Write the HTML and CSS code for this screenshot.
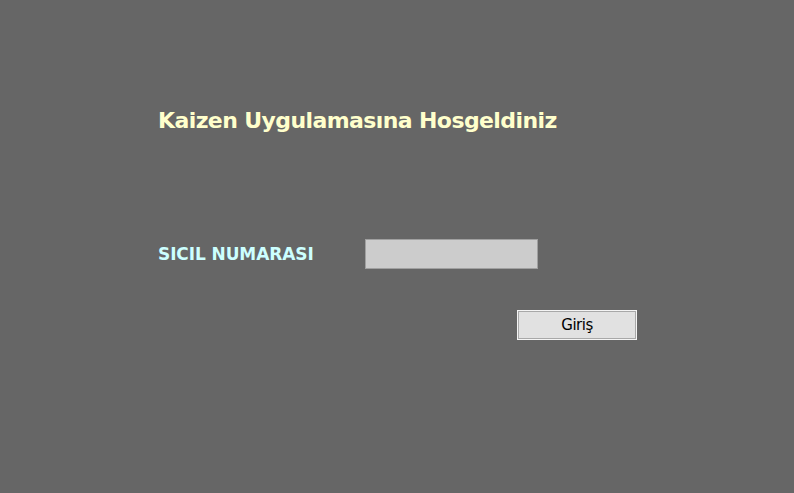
FILE: index.html
```html
<!DOCTYPE html>
<html lang="tr">
<head>
<meta charset="utf-8">
<title>Kaizen</title>
<link rel="stylesheet" href="styles.css">
</head>
<body>
<div class="page">
  <h1 class="title">Kaizen Uygulamasına Hosgeldiniz</h1>
  <div class="row">
    <label class="label" for="sicil">SICIL NUMARASI</label>
    <input class="field" id="sicil" type="text">
  </div>
  <div class="actions">
    <button class="btn" type="button">Giriş</button>
  </div>
</div>
</body>
</html>
```
FILE: styles.css
```css
html, body {
  margin: 0;
  padding: 0;
  background: #666666;
  height: 100%;
}
.page {
  padding: 107px 0 0 158px;
  font-family: "DejaVu Sans", Verdana, sans-serif;
}
.title {
  margin: 0;
  font-size: 22px;
  font-weight: bold;
  color: #ffffcc;
  line-height: 28px;
  letter-spacing: -0.6px;
}
.row {
  display: flex;
  align-items: center;
  margin-top: 104px;
  height: 30px;
}
.label {
  width: 207px;
  font-size: 17px;
  font-weight: bold;
  color: #ccffff;
  letter-spacing: -0.1px;
}
.field {
  box-sizing: border-box;
  width: 173px;
  height: 30px;
  margin: 0;
  padding: 0 4px;
  border: 1px solid #a0a0a0;
  background: #cccccc;
  outline: none;
}
.actions {
  margin-top: 41px;
  padding-left: 359px;
}
.btn {
  box-sizing: border-box;
  width: 120px;
  height: 30px;
  margin: 0;
  padding: 0;
  border: 1px solid #f4f4f4;
  box-shadow: inset 0 0 0 1px #a8a8a8;
  background: #e1e1e1;
  font-family: "DejaVu Sans", Verdana, sans-serif;
  font-size: 15px;
  color: #000;
  letter-spacing: -0.5px;
}
```
